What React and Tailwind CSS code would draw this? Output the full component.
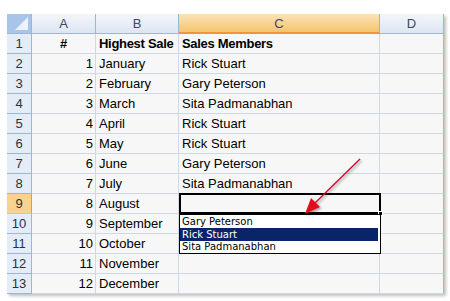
const rows = [
  ["#", "Highest Sale", "Sales Members", true],
  ["1", "January", "Rick Stuart"],
  ["2", "February", "Gary Peterson"],
  ["3", "March", "Sita Padmanabhan"],
  ["4", "April", "Rick Stuart"],
  ["5", "May", "Rick Stuart"],
  ["6", "June", "Gary Peterson"],
  ["7", "July", "Sita Padmanabhan"],
  ["8", "August", ""],
  ["9", "September", ""],
  ["10", "October", ""],
  ["11", "November", ""],
  ["12", "December", ""],
];

const grid = "grid grid-cols-[25px_64px_83px_201px_64px]";
const cell = "h-5 border-r border-b border-[#d0d7e5] leading-[19px] overflow-hidden whitespace-nowrap";

function App() {
  return (
    <div className="w-[450px] h-[301px] bg-white pl-[7px] pt-[14px] font-['Liberation_Sans',Arial,sans-serif] text-[13px] text-black">
      <div className="relative w-[437px] bg-[#f7f7f7] shadow-[2px_2px_3px_rgba(0,0,0,0.25)]">
        {/* column headers */}
        <div className={grid}>
          <div className="h-5 bg-[#a9c4e9] border-r border-b border-[#9eb6ce] relative">
            <div className="absolute right-[3px] bottom-[3px] w-0 h-0 border-l-[13px] border-l-transparent border-b-[13px] border-b-white/80" />
          </div>
          {["A", "B"].map((c) => (
            <div key={c} className="h-5 bg-gradient-to-b from-[#f3f6fb] to-[#dde6f2] border-r border-b border-[#9eb6ce] text-center leading-[19px] text-[#3b4a5c]">
              {c}
            </div>
          ))}
          <div className="h-5 bg-gradient-to-b from-[#fae3b8] to-[#f3c56c] border-r border-b-2 border-r-[#9eb6ce] border-b-[#f29536] text-center leading-[19px] text-[#3b4a5c]">
            C
          </div>
          <div className="h-5 bg-gradient-to-b from-[#f3f6fb] to-[#dde6f2] border-r border-b border-[#9eb6ce] text-center leading-[19px] text-[#3b4a5c]">
            D
          </div>
        </div>
        {rows.map((r, i) => (
          <div key={i} className={grid}>
            <div
              className={
                "h-5 border-r border-b text-center leading-[19px] text-[#27333f] " +
                (i === 8
                  ? "bg-[#f8d38f] border-r-[#f29536] border-b-[#f0c27a]"
                  : "bg-[#e4ecf7] border-r-[#9eb6ce] border-b-[#9eb6ce]")
              }
            >
              {i + 1}
            </div>
            <div className={cell + (r[3] ? " text-center font-bold" : " text-right pr-[2px]")}>{r[0]}</div>
            <div className={cell + " pl-[3px]" + (r[3] ? " font-bold tracking-[-0.3px]" : "")}>{r[1]}</div>
            <div className={cell + " pl-[3px]" + (r[3] ? " font-bold tracking-[-0.3px]" : "")}>{r[2]}</div>
            <div className={cell + " border-r-[#9eb6ce]"} />
          </div>
        ))}

        {/* active cell C9 */}
        <div className="absolute left-[172px] top-[179px] w-[202px] h-[21px] border-2 border-black" />
        <div className="absolute left-[371px] top-[197px] w-[5px] h-[5px] bg-black border border-white" />

        {/* validation dropdown */}
        <div className="absolute left-[172px] top-[200px] w-[202px] h-[40px] bg-white border border-black font-['DejaVu_Sans',Tahoma,sans-serif] text-[10px] leading-[12px]">
          <div className="h-[13px] pl-[2px] pt-px">Gary Peterson</div>
          <div className="h-[13px] pl-[2px] pt-px mr-[2px] bg-[#0a246a] text-white">Rick Stuart</div>
          <div className="h-[12px] pl-[2px]">Sita Padmanabhan</div>
        </div>

        {/* red arrow */}
        <svg className="absolute left-[290px] top-[140px]" width="70" height="64" viewBox="0 0 70 64">
          <defs>
            <filter id="sh" x="-20%" y="-20%" width="160%" height="160%">
              <feDropShadow dx="1.5" dy="1.5" stdDeviation="1.2" floodColor="#000" floodOpacity="0.35" />
            </filter>
          </defs>
          <g filter="url(#sh)">
            <line x1="63" y1="5" x2="18" y2="49" stroke="#c8102e" strokeWidth="1.4" />
            <polygon points="8,60 14,44 23,53" fill="#e0101a" />
          </g>
        </svg>
      </div>
    </div>
  );
}

export default App;
